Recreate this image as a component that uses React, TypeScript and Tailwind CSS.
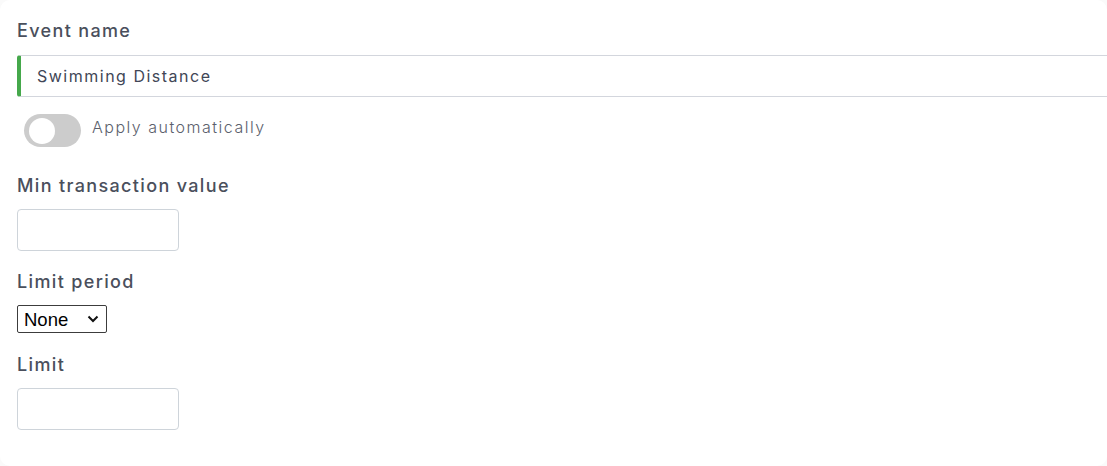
import React from "react";

const font = { fontFamily: "Inter, 'Open Sans', sans-serif" };

export default function App() {
  return (
    <div className="w-[1107px] h-[466px] bg-[#fafafa] overflow-hidden">
      <div
        className="w-[1107px] h-[466px] bg-white rounded-[10px] pl-[17px] pt-[19px] flex flex-col"
        style={font}
      >
        <label className="text-[18px] font-medium text-[#4a4f5c] leading-[24px] tracking-[1.35px]">
          Event name
        </label>
        <div className="mt-[12px] h-[42px] flex items-center border-y border-[#d3d6dd] border-l-[4px] border-l-[#45a84b] rounded-l-[3px] pl-[16px]">
          <span className="text-[16px] text-[#414656] tracking-[1.5px]">Swimming Distance</span>
        </div>
        <div className="mt-[17px] ml-[7px] flex items-center gap-[11px]">
          <div className="w-[57px] h-[33px] rounded-full bg-[#cccccc] flex items-center pl-[5px]">
            <div className="w-[26px] h-[26px] rounded-full bg-white" />
          </div>
          <span className="text-[16px] font-light text-[#5b606c] tracking-[1.5px] -mt-[7px]">
            Apply automatically
          </span>
        </div>
        <label className="mt-[27px] text-[18px] font-medium text-[#4a4f5c] leading-[24px] tracking-[1.35px]">
          Min transaction value
        </label>
        <input
          className="mt-[11px] w-[162px] h-[42px] border border-[#ced4da] rounded-[4px] outline-none"
        />
        <label className="mt-[19px] text-[18px] font-medium text-[#4a4f5c] leading-[24px] tracking-[1.35px]">
          Limit period
        </label>
        <div className="relative mt-[11px] w-[90px] h-[28px]">
          <select
            className="appearance-none w-[90px] h-[28px] border border-[#3c3c3c] rounded-[2px] pl-[6px] text-[18.5px] text-black bg-white outline-none"
            style={{ fontFamily: "'Liberation Sans', Arial, sans-serif" }}
            defaultValue="None"
          >
            <option>None</option>
          </select>
          <svg
            className="absolute left-[70px] top-[10px] pointer-events-none"
            width="12"
            height="8"
            viewBox="0 0 12 8"
          >
            <path d="M1.5 1.5 L6 6 L10.5 1.5" fill="none" stroke="#111" strokeWidth="2" />
          </svg>
        </div>
        <label className="mt-[20px] text-[18px] font-medium text-[#4a4f5c] leading-[24px] tracking-[1.35px]">
          Limit
        </label>
        <input
          className="mt-[11px] w-[162px] h-[42px] border border-[#ced4da] rounded-[4px] outline-none"
        />
      </div>
    </div>
  );
}
